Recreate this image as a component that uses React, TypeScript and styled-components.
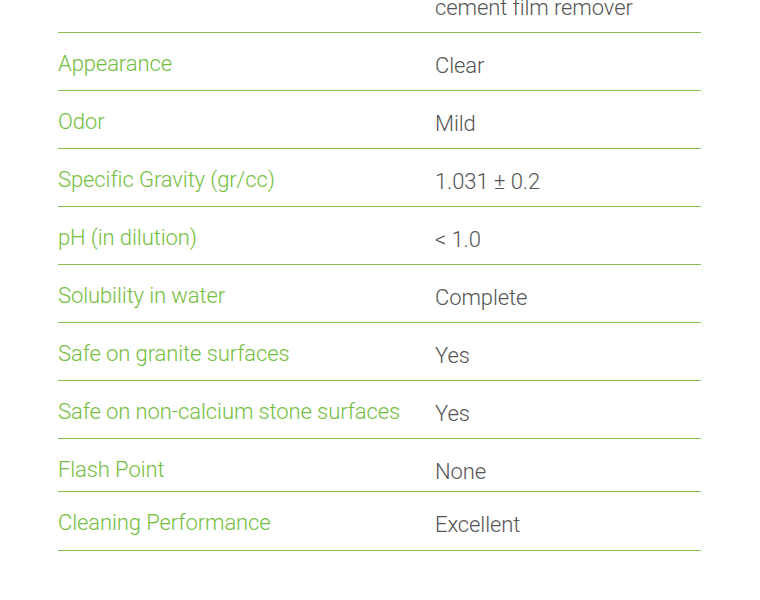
import React from "react";
import styled, { createGlobalStyle } from "styled-components";

const GlobalStyle = createGlobalStyle`
  html, body {
    margin: 0;
    padding: 0;
    background: #ffffff;
    overflow: hidden;
  }
  body {
    font-family: Roboto, "Liberation Sans", Arial, sans-serif;
  }
`;

const Page = styled.div`
  width: 760px;
  height: 600px;
  overflow: hidden;
  background: #ffffff;
`;

const Table = styled.div`
  margin: -51px 0 0 58px;
  width: 643px;
  display: flex;
  flex-direction: column;
`;

const Row = styled.div<{ $h: number }>`
  display: grid;
  grid-template-columns: 377px 1fr;
  height: ${(p) => p.$h}px;
  box-sizing: border-box;
  border-bottom: 1px solid #86c150;
`;

const Label = styled.div`
  padding-top: 18px;
  font-size: 22px;
  font-weight: 300;
  line-height: 26px;
  letter-spacing: -0.1px;
  color: #74be3e;
  white-space: nowrap;
`;

const Value = styled.div`
  padding-top: 20px;
  font-size: 22px;
  font-weight: 300;
  line-height: 26px;
  letter-spacing: -0.1px;
  color: #555555;
`;

const rows: { label: string; value: React.ReactNode; h: number }[] = [
  {
    label: "",
    value: (
      <>
        Acid-based concentrated
        <br />
        cement film remover
      </>
    ),
    h: 84,
  },
  { label: "Appearance", value: "Clear", h: 58 },
  { label: "Odor", value: "Mild", h: 58 },
  { label: "Specific Gravity (gr/cc)", value: "1.031 ± 0.2", h: 58 },
  { label: "pH (in dilution)", value: "< 1.0", h: 58 },
  { label: "Solubility in water", value: "Complete", h: 58 },
  { label: "Safe on granite surfaces", value: "Yes", h: 58 },
  { label: "Safe on non-calcium stone surfaces", value: "Yes", h: 58 },
  { label: "Flash Point", value: "None", h: 53 },
  { label: "Cleaning Performance", value: "Excellent", h: 59 },
];

export default function App() {
  return (
    <>
      <GlobalStyle />
      <Page>
        <Table>
          {rows.map((r, i) => (
            <Row key={i} $h={r.h}>
              <Label>{r.label}</Label>
              <Value>{r.value}</Value>
            </Row>
          ))}
        </Table>
      </Page>
    </>
  );
}
